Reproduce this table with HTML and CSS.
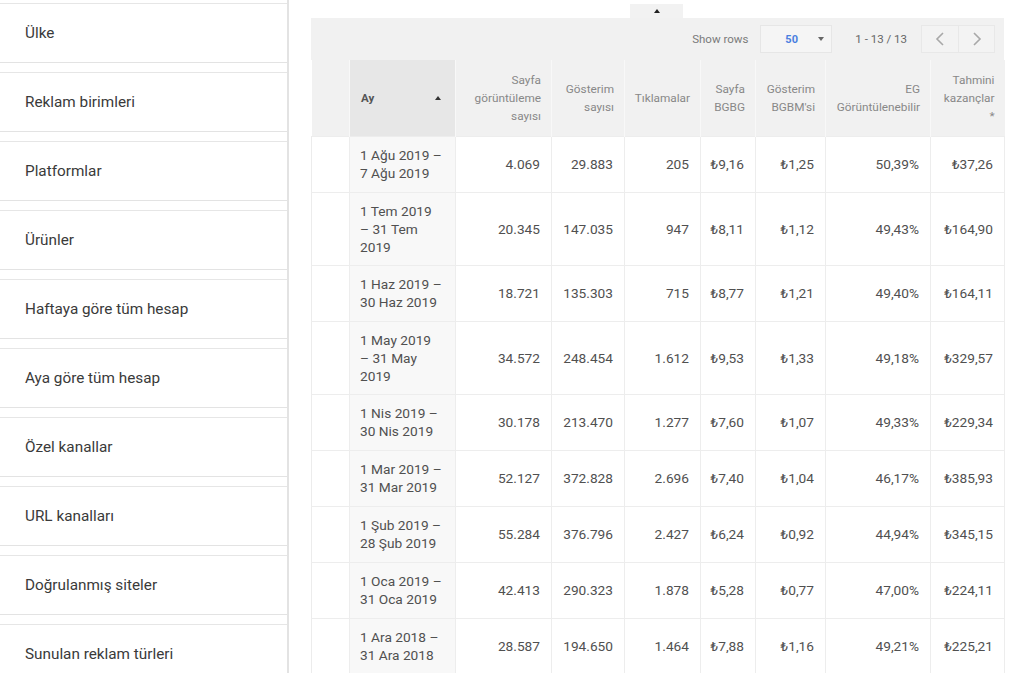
FILE: index.html
```html
<!DOCTYPE html>
<html lang="tr">
<head>
<meta charset="utf-8">
<title>Rapor</title>
<link rel="stylesheet" href="styles.css">
</head>
<body>
<div class="page">
  <nav class="sidebar">
    <div class="card">Ülke</div>
    <div class="card">Reklam birimleri</div>
    <div class="card">Platformlar</div>
    <div class="card">Ürünler</div>
    <div class="card">Haftaya göre tüm hesap</div>
    <div class="card">Aya göre tüm hesap</div>
    <div class="card">Özel kanallar</div>
    <div class="card">URL kanalları</div>
    <div class="card">Doğrulanmış siteler</div>
    <div class="card">Sunulan reklam türleri</div>
  </nav>
  <main class="content">
    <div class="tab-row"><div class="tab"><span class="caret-up"></span></div></div>
    <div class="panel">
      <div class="toolbar">
        <span class="label">Show rows</span>
        <div class="select"><span class="sel-val">50</span><span class="caret-down"></span></div>
        <span class="range">1 - 13 / 13</span>
        <div class="pager">
          <button class="pbtn"><svg width="10" height="14" viewBox="0 0 10 14"><path d="M8 1 L2 7 L8 13" fill="none" stroke="#a8a8a8" stroke-width="1.6"/></svg></button>
          <button class="pbtn"><svg width="10" height="14" viewBox="0 0 10 14"><path d="M2 1 L8 7 L2 13" fill="none" stroke="#a8a8a8" stroke-width="1.6"/></svg></button>
        </div>
      </div>
      <table class="grid">
        <colgroup>
          <col class="c0"><col class="c1"><col class="c2"><col class="c3"><col class="c4"><col class="c5"><col class="c6"><col class="c7"><col class="c8">
        </colgroup>
        <thead>
          <tr>
            <th></th>
            <th class="sorted"><div class="ay"><span>Ay</span><span class="caret-up small"></span></div></th>
            <th>Sayfa<br>görüntüleme<br>sayısı</th>
            <th>Gösterim<br>sayısı</th>
            <th>Tıklamalar</th>
            <th>Sayfa<br>BGBG</th>
            <th>Gösterim<br>BGBM'si</th>
            <th>EG<br>Görüntülenebilir</th>
            <th>Tahmini<br>kazançlar<br>*</th>
          </tr>
        </thead>
        <tbody>
          <tr class="r2"><td></td><td class="date">1 Ağu 2019 –<br>7 Ağu 2019</td><td>4.069</td><td>29.883</td><td>205</td><td>₺9,16</td><td>₺1,25</td><td>50,39%</td><td>₺37,26</td></tr>
          <tr class="r3"><td></td><td class="date">1 Tem 2019<br>– 31 Tem<br>2019</td><td>20.345</td><td>147.035</td><td>947</td><td>₺8,11</td><td>₺1,12</td><td>49,43%</td><td>₺164,90</td></tr>
          <tr class="r2"><td></td><td class="date">1 Haz 2019 –<br>30 Haz 2019</td><td>18.721</td><td>135.303</td><td>715</td><td>₺8,77</td><td>₺1,21</td><td>49,40%</td><td>₺164,11</td></tr>
          <tr class="r3"><td></td><td class="date">1 May 2019<br>– 31 May<br>2019</td><td>34.572</td><td>248.454</td><td>1.612</td><td>₺9,53</td><td>₺1,33</td><td>49,18%</td><td>₺329,57</td></tr>
          <tr class="r2"><td></td><td class="date">1 Nis 2019 –<br>30 Nis 2019</td><td>30.178</td><td>213.470</td><td>1.277</td><td>₺7,60</td><td>₺1,07</td><td>49,33%</td><td>₺229,34</td></tr>
          <tr class="r2"><td></td><td class="date">1 Mar 2019 –<br>31 Mar 2019</td><td>52.127</td><td>372.828</td><td>2.696</td><td>₺7,40</td><td>₺1,04</td><td>46,17%</td><td>₺385,93</td></tr>
          <tr class="r2"><td></td><td class="date">1 Şub 2019 –<br>28 Şub 2019</td><td>55.284</td><td>376.796</td><td>2.427</td><td>₺6,24</td><td>₺0,92</td><td>44,94%</td><td>₺345,15</td></tr>
          <tr class="r2"><td></td><td class="date">1 Oca 2019 –<br>31 Oca 2019</td><td>42.413</td><td>290.323</td><td>1.878</td><td>₺5,28</td><td>₺0,77</td><td>47,00%</td><td>₺224,11</td></tr>
          <tr class="r2"><td></td><td class="date">1 Ara 2018 –<br>31 Ara 2018</td><td>28.587</td><td>194.650</td><td>1.464</td><td>₺7,88</td><td>₺1,16</td><td>49,21%</td><td>₺225,21</td></tr>
        </tbody>
      </table>
    </div>
  </main>
</div>
</body>
</html>
```

FILE: styles.css
```css
html, body {
  margin: 0;
  padding: 0;
  background: #ffffff;
  height: 673px;
  overflow: hidden;
}
body {
  font-family: Roboto, "Noto Sans", "DejaVu Sans", sans-serif;
  color: #444;
}
.page {
  display: flex;
  align-items: flex-start;
}
.sidebar {
  width: 287px;
  flex: none;
  border-right: 2px solid #e3e3e3;
  padding-top: 3px;
  display: flex;
  flex-direction: column;
  gap: 9px;
  height: 670px;
  overflow: hidden;
}
.sidebar::before {
  content: "";
  display: block;
  flex: none;
  height: 0;
  border-top: 1px solid #e6e6e6;
  margin-top: -10px;
}
.card {
  flex: none;
  height: 58px;
  border-top: 1px solid #e6e6e6;
  border-bottom: 1px solid #e3e3e3;
  display: flex;
  align-items: center;
  padding-left: 25px;
  font-size: 15.3px;
  color: #3a3a3a;
  background: #fff;
}
.content {
  margin-left: 22px;
  width: 693px;
  flex: none;
}
.tab-row {
  display: flex;
  height: 18px;
  align-items: flex-end;
  padding-left: 319px;
}
.tab {
  width: 53px;
  height: 14px;
  background: #f2f2f2;
  display: flex;
  justify-content: center;
  align-items: center;
}
.caret-up {
  width: 0;
  height: 0;
  border-left: 3.5px solid transparent;
  border-right: 3.5px solid transparent;
  border-bottom: 4px solid #222;
}
.caret-up.small {
  border-bottom-color: #333;
}
.caret-down {
  width: 0;
  height: 0;
  border-left: 3.5px solid transparent;
  border-right: 3.5px solid transparent;
  border-top: 4px solid #666;
}
.panel {
  background: #f1f1f1;
}
.toolbar {
  height: 42px;
  display: flex;
  align-items: center;
  justify-content: flex-end;
  padding-right: 9px;
  font-size: 11.5px;
  color: #7a7a7a;
  box-sizing: border-box;
}
.label {
  margin-right: 12px;
}
.select {
  width: 72px;
  height: 28px;
  box-sizing: border-box;
  border: 1px solid #e6e6e6;
  background: #f5f5f5;
  display: flex;
  align-items: center;
  justify-content: space-between;
  padding: 0 7px 0 24px;
}
.sel-val {
  color: #4a7fe0;
  font-weight: 700;
  font-size: 11px;
}
.range {
  margin-left: 23px;
  margin-right: 14px;
  color: #666;
}
.pager {
  display: flex;
  height: 28px;
  border: 1px solid #e8e8e8;
  box-sizing: border-box;
}
.pbtn {
  width: 36px;
  height: 26px;
  border: 0;
  background: #f3f3f3;
  padding: 0;
  display: flex;
  align-items: center;
  justify-content: center;
}
.pbtn + .pbtn {
  border-left: 1px solid #e8e8e8;
}
.grid {
  width: 693px;
  table-layout: fixed;
  border-collapse: collapse;
  background: #fff;
}
.c0 { width: 38px; }
.c1 { width: 106px; }
.c2 { width: 96px; }
.c3 { width: 73px; }
.c4 { width: 76px; }
.c5 { width: 55px; }
.c6 { width: 70px; }
.c7 { width: 105px; }
.c8 { width: 74px; }
thead th {
  background: #f1f1f1;
  height: 76px;
  padding: 0 10px 0 0;
  box-sizing: border-box;
  font-size: 11.8px;
  font-weight: 400;
  line-height: 18px;
  color: #888;
  text-align: right;
  vertical-align: middle;
  border-left: 1px solid #f8f8f8;
  white-space: nowrap;
}
thead th:first-child {
  border-left: 0;
}
thead th.sorted {
  background: #e7e7e7;
  padding: 0 14px 0 11px;
}
.ay {
  display: flex;
  align-items: center;
  justify-content: space-between;
  font-weight: 700;
  color: #555;
  font-size: 11.5px;
}
tbody td {
  border: 1px solid #ededed;
  font-size: 13.7px;
  line-height: 18px;
  color: #505050;
  text-align: right;
  padding: 0 11px 0 0;
  vertical-align: middle;
  white-space: nowrap;
}
tbody td:first-child {
  border-left: 1px solid #ececec;
}
tbody td.date {
  text-align: left;
  padding: 0 0 0 10px;
  background: #f8f8f8;
}
tr.r2 td { height: 55px; }
tr.r3 td { height: 72px; }
```
